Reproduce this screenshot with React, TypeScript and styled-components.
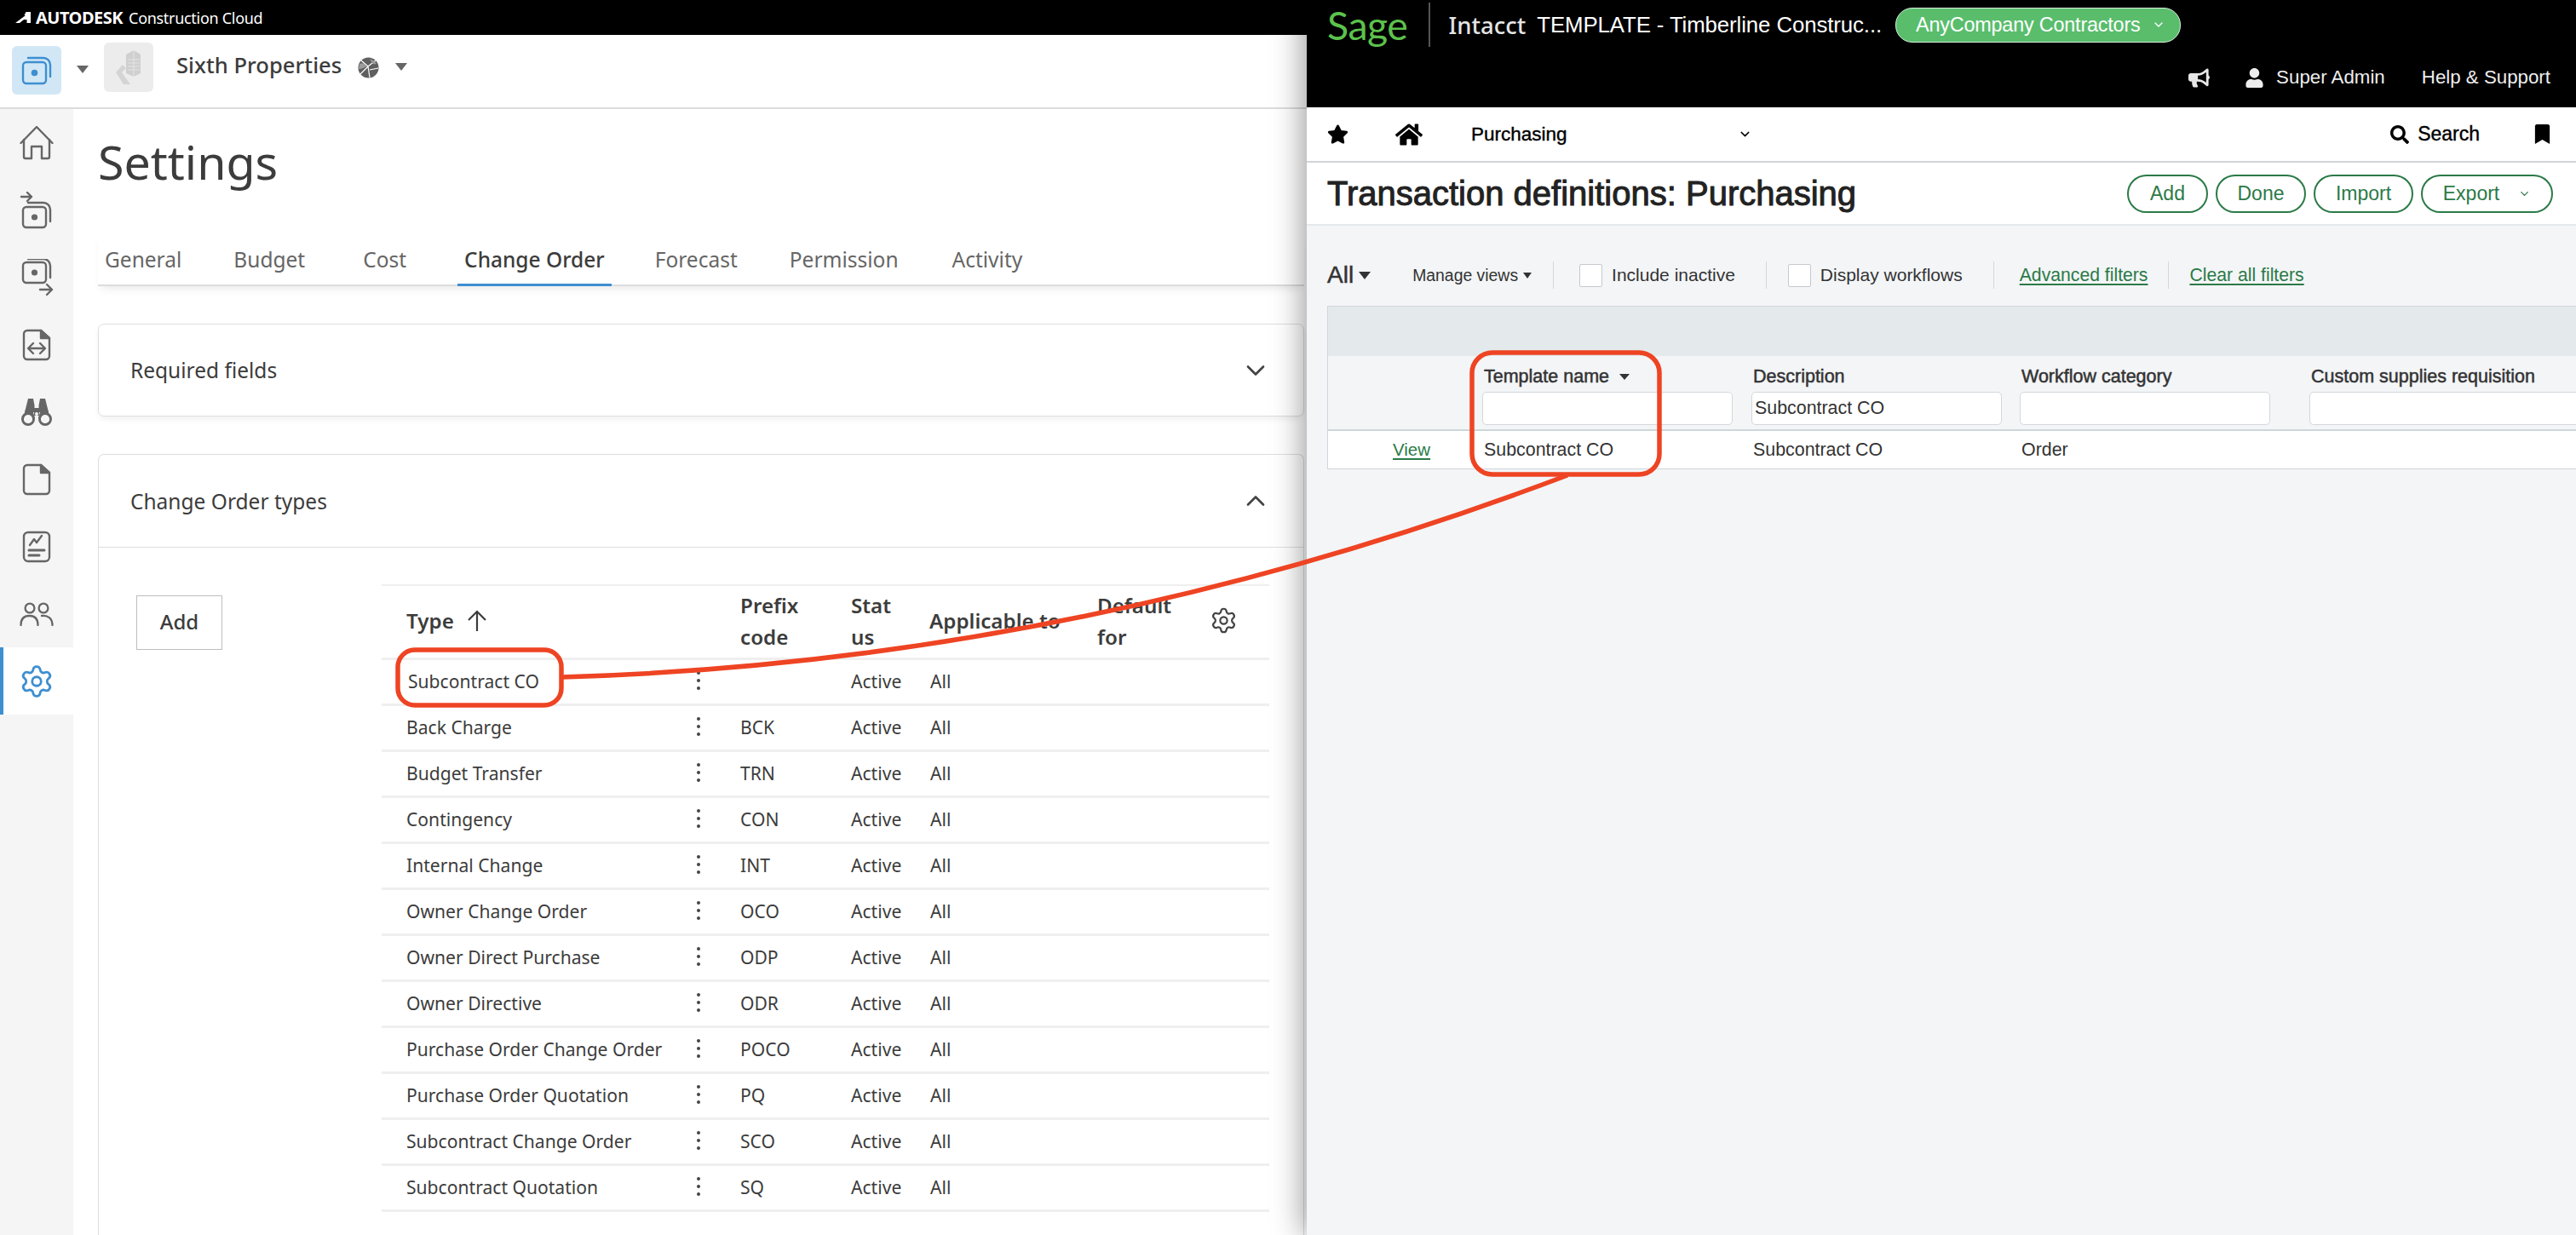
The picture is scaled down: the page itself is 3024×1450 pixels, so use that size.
import React from "react";
import styled, { createGlobalStyle } from "styled-components";
import { ChevronDown, ChevronUp, Settings as Gear } from "lucide-react";
import { FaStar, FaHome, FaSearch, FaBookmark, FaBullhorn, FaUser } from "react-icons/fa";

const Global = createGlobalStyle`
  html, body { margin: 0; padding: 0; background: #fff; }
  * { box-sizing: border-box; }
`;

const ADSK = `"Noto Sans", "Open Sans", sans-serif`;
const SAGE = `"Liberation Sans", Arial, sans-serif`;
const GREEN = "#2b7a47";

const Page = styled.div`
  position: relative;
  display: flex;
  width: 3024px;
  height: 1450px;
  overflow: hidden;
`;

/* ---------- left: Autodesk ---------- */
const LeftPanel = styled.div`
  width: 1534px;
  flex: none;
  display: flex;
  flex-direction: column;
  font-family: ${ADSK};
  color: #3c3c3c;
  overflow: hidden;
`;
const BlackBar = styled.div`
  height: 41px;
  flex: none;
  background: #000;
  color: #fff;
  display: flex;
  align-items: center;
  padding-left: 18px;
`;
const AdskBrand = styled.b`
  font-weight: 700;
  margin: 0 7px 0 6px;
  font-size: 20px;
  letter-spacing: -0.5px;
`;
const AdskSub = styled.span`
  font-weight: 400;
  font-size: 18px;
  letter-spacing: -0.3px;
`;
const ProjectBar = styled.div`
  height: 87px;
  flex: none;
  border-bottom: 2px solid #dcdcdc;
  display: flex;
  align-items: flex-start;
  padding-left: 14px;
`;
const AppTile = styled.div`
  width: 58px;
  height: 57px;
  margin-top: 13px;
  border-radius: 6px;
  background: #d2e7f5;
  display: flex;
  align-items: center;
  justify-content: center;
  color: #3d8fd1;
`;
const Caret = styled.span<{ $w?: number; $c?: string }>`
  display: inline-block;
  flex: none;
  width: 0;
  height: 0;
  border-left: ${(p) => (p.$w ?? 14) / 2}px solid transparent;
  border-right: ${(p) => (p.$w ?? 14) / 2}px solid transparent;
  border-top: ${(p) => ((p.$w ?? 14) * 9) / 14}px solid ${(p) => p.$c ?? "#666"};
`;
const AppCaret = styled.div`
  margin: 36px 18px 0 18px;
  height: 12px;
  line-height: 0;
`;
const LogoTile = styled.div`
  width: 58px;
  height: 58px;
  margin-top: 9px;
  border-radius: 6px;
  background: #ececec;
  display: flex;
  align-items: center;
  justify-content: center;
`;
const ProjectName = styled.div`
  margin: 18px 0 0 27px;
  font-size: 25.6px;
  line-height: 36px;
  font-weight: 500;
  color: #3c3c3c;
`;
const GlobeWrap = styled.div`
  margin: 26px 19px 0 19px;
  line-height: 0;
`;
const ProjectCaret = styled.div`
  margin-top: 33px;
  line-height: 0;
`;
const Body = styled.div`
  flex: 1;
  display: flex;
  min-height: 0;
`;
const Sidebar = styled.nav`
  width: 86px;
  flex: none;
  background: #f5f5f5;
  display: flex;
  flex-direction: column;
`;
const SideItem = styled.div<{ $active?: boolean }>`
  height: 79px;
  display: flex;
  align-items: center;
  justify-content: center;
  color: ${(p) => (p.$active ? "#3d8fd1" : "#666")};
  background: ${(p) => (p.$active ? "#fff" : "transparent")};
  border-left: ${(p) => (p.$active ? "4px solid #3d8fd1" : "none")};
  padding-right: ${(p) => (p.$active ? "4px" : "0")};
`;
const Main = styled.main`
  flex: 1;
  min-width: 0;
  padding: 0 3px 0 29px;
  display: flex;
  flex-direction: column;
`;
const Title = styled.h1`
  margin: 25px 0 48px 0;
  font-size: 55.5px;
  line-height: 74px;
  font-weight: 400;
  color: #3c3c3c;
`;
const Tabs = styled.div`
  flex: none;
  display: flex;
  height: 61px;
  border-bottom: 2px solid #dcdcdc;
  box-shadow: 0 6px 10px -4px rgba(0, 0, 0, 0.1);
`;
const Tab = styled.div<{ $active?: boolean; $gap?: number }>`
  margin-left: ${(p) => p.$gap ?? 0}px;
  padding: 0 8px;
  height: 61px;
  line-height: 60px;
  font-size: 24.5px;
  font-weight: ${(p) => (p.$active ? 500 : 400)};
  color: ${(p) => (p.$active ? "#3c3c3c" : "#666")};
  border-bottom: ${(p) => (p.$active ? "3px solid #3d8fd1" : "none")};
  white-space: nowrap;
`;
const Card = styled.section<{ $open?: boolean }>`
  flex: ${(p) => (p.$open ? "1" : "none")};
  margin-top: 44px;
  border: 1.5px solid #dedede;
  border-radius: 7px 7px ${(p) => (p.$open ? "0 0" : "7px 7px")};
  box-shadow: ${(p) => (p.$open ? "none" : "0 4px 8px -2px rgba(0,0,0,.08)")};
  ${(p) => (p.$open ? "border-bottom: none;" : "")}
`;
const CardHead = styled.div<{ $open?: boolean }>`
  height: ${(p) => (p.$open ? "109px" : "107px")};
  display: flex;
  align-items: center;
  justify-content: space-between;
  padding: 0 38px 0 37px;
  font-size: 24.5px;
  color: #3c3c3c;
  border-bottom: ${(p) => (p.$open ? "1.5px solid #dedede" : "none")};
`;
const CardBody = styled.div`
  display: flex;
  align-items: flex-start;
  padding: 43px 0 0 44px;
`;
const AddButton = styled.button`
  width: 101px;
  height: 64px;
  margin-top: 13px;
  padding: 0 0 3px;
  flex: none;
  background: #fff;
  border: 1.5px solid #bdbdbd;
  font-family: ${ADSK};
  font-size: 24px;
  font-weight: 500;
  color: #3c3c3c;
`;
const TypeTable = styled.div`
  width: 1042px;
  margin-left: 187px;
  flex: none;
  border-top: 2px solid #efefef;
`;
const TypeGrid = `
  display: grid;
  grid-template-columns: 361px 60px 130px 92px 197px 120px 1fr;
`;
const TypeHead = styled.div`
  ${TypeGrid}
  height: 87px;
  padding-bottom: 3px;
  border-bottom: 3px solid #efefef;
  align-items: center;
  font-size: 24.2px;
  line-height: 37px;
  font-weight: 600;
  color: #3c3c3c;
`;
const TypeRow = styled.div`
  ${TypeGrid}
  height: 54px;
  padding-bottom: 3px;
  border-bottom: 3px solid #efefef;
  align-items: center;
  font-size: 21.1px;
  color: #3c3c3c;
`;
const TypeHeadCell = styled.div<{ $pad?: number }>`
  padding-left: ${(p) => p.$pad ?? 0}px;
  display: flex;
  align-items: center;
  gap: 15px;
`;
const TypeCell = styled.div<{ $pad?: number }>`
  padding-left: ${(p) => p.$pad ?? 0}px;
  white-space: nowrap;
`;
const NameCell = styled(TypeCell)`
  grid-column: 1;
  grid-row: 1;
`;
const HeadGear = styled(Gear)`
  margin-left: 12px;
`;
const Kebab = styled.span`
  display: block;
  width: 4px;
  height: 4px;
  margin-left: 370px;
  border-radius: 50%;
  background: #444;
  box-shadow: 0 -9px 0 #444, 0 9px 0 #444;
`;
const KebabCell = styled.div`
  width: 0;
  overflow: visible;
  grid-column: 1;
  grid-row: 1;
`;

/* ---------- right: Sage ---------- */
const RightPanel = styled.div`
  flex: 1;
  min-width: 0;
  position: relative;
  z-index: 2;
  display: flex;
  flex-direction: column;
  font-family: ${SAGE};
  color: #333;
  background: #f3f5f7;
  box-shadow: -4px 0 34px rgba(0, 0, 0, 0.4);
`;
const SageHeader = styled.header`
  height: 126px;
  flex: none;
  background: #000;
  color: #fff;
  display: flex;
  flex-direction: column;
`;
const SageTop = styled.div`
  height: 58px;
  display: flex;
  align-items: center;
  padding-left: 24px;
`;
const SageLogo = styled.span`
  width: 93px;
  flex: none;
  font-family: "Lato", sans-serif;
  font-size: 46.5px;
  line-height: 56px;
  color: #5cc24c;
  white-space: nowrap;
  letter-spacing: -0.5px;
`;
const HeadDivider = styled.span`
  width: 1.5px;
  height: 52px;
  background: #555;
  margin: 0 22px 0 26px;
`;
const Intacct = styled.span`
  font-family: ${ADSK};
  font-size: 27.5px;
  font-weight: 500;
  color: #e4e4e4;
  margin-right: 13px;
`;
const Company = styled.span`
  font-size: 25.8px;
  white-space: nowrap;
  letter-spacing: -0.1px;
`;
const Pill = styled.div`
  margin-left: 16px;
  width: 335px;
  height: 41px;
  flex: none;
  border-radius: 20px;
  background: #59bd6c;
  border: 1.5px solid #d9f0dd;
  display: flex;
  align-items: center;
  padding-left: 23px;
  font-size: 23.4px;
  white-space: nowrap;
  letter-spacing: -0.2px;
  gap: 14px;
`;
const SageUser = styled.div`
  flex: 1;
  display: flex;
  align-items: center;
  justify-content: flex-end;
  padding: 0 30px 2px 0;
  font-size: 22.3px;
  color: #eee;
  white-space: nowrap;
`;
const UserName = styled.span`
  margin: 0 43px 0 14px;
`;
const Megaphone = styled(FaBullhorn)`
  margin-right: 41px;
  color: #e6e6e6;
`;
const SageNav = styled.div`
  height: 65px;
  flex: none;
  background: #fff;
  border-bottom: 2px solid #cfd6db;
  display: flex;
  align-items: center;
  padding: 0 28px 0 24px;
  color: #000;
  font-size: 22.5px;
  font-weight: 500;
`;
const NavHome = styled(FaHome)`
  margin-left: 55px;
`;
const NavLabel = styled.span`
  margin-left: 57px;
  width: 313px;
  -webkit-text-stroke: 0.4px #000;
`;
const NavSpacer = styled.span`
  flex: 1;
`;
const NavSearch = styled.span`
  font-size: 23px;
  -webkit-text-stroke: 0.4px #000;
  margin: 0 62px 0 10px;
`;
const TitleBar = styled.div`
  height: 74px;
  flex: none;
  background: #fff;
  border-bottom: 2px solid #e6e9eb;
  display: flex;
  align-items: center;
  justify-content: space-between;
  padding: 0 27px 0 24px;
`;
const SageTitle = styled.h2`
  margin: 0;
  font-size: 40px;
  font-weight: 400;
  color: #222;
  -webkit-text-stroke: 1px #222;
  white-space: nowrap;
`;
const Buttons = styled.div`
  display: flex;
  gap: 9px;
`;
const PillButton = styled.button<{ $w: number }>`
  width: ${(p) => p.$w}px;
  height: 45px;
  border-radius: 23px;
  border: 2.5px solid ${GREEN};
  background: #fff;
  color: ${GREEN};
  font-family: ${SAGE};
  font-size: 23px;
  display: flex;
  align-items: center;
  justify-content: center;
  gap: 22px;
  padding: 0;
`;
const Filters = styled.div`
  height: 94px;
  flex: none;
  display: flex;
  align-items: center;
  padding: 22px 0 0 24px;
  white-space: nowrap;
`;
const AllLabel = styled.span`
  font-size: 28px;
  color: #333;
  -webkit-text-stroke: 0.5px #333;
  margin-right: 6px;
`;
const ManageViews = styled.span`
  font-size: 19.4px;
  color: #333;
  margin: 0 6px 0 49px;
`;
const VDivider = styled.span<{ $l: number; $r: number }>`
  width: 1px;
  height: 32px;
  background: #d3d8dc;
  margin: 0 ${(p) => p.$r}px 0 ${(p) => p.$l}px;
`;
const CheckBox = styled.span`
  width: 27px;
  height: 27px;
  background: #fff;
  border: 1.5px solid #c6c9cc;
  border-radius: 2px;
  margin-right: 11px;
`;
const FilterText = styled.span`
  font-size: 21px;
  color: #333;
`;
const GreenLink = styled.span<{ $size?: number }>`
  font-size: ${(p) => p.$size ?? 21.2}px;
  color: ${GREEN};
  text-decoration: underline;
  text-underline-offset: 3px;
  text-decoration-thickness: 2px;
`;
const DataTable = styled.div`
  margin-left: 24px;
  border: 1.5px solid #cfd6db;
  border-right: none;
  flex: none;
`;
const Band = styled.div`
  height: 58px;
  background: #e4eaec;
`;
const DataGrid = `
  display: grid;
  grid-template-columns: 181px 316px 315px 340px 1fr;
`;
const ColHead = styled.div`
  ${DataGrid}
  height: 88px;
  padding-top: 12px;
  border-bottom: 2px solid #cfd6db;
`;
const HeadCell = styled.div`
  display: flex;
  flex-direction: column;
  gap: 5px;
`;
const HeadLabel = styled.div`
  font-size: 21.5px;
  line-height: 25px;
  padding-left: 2px;
  color: #333;
  -webkit-text-stroke: 0.5px #333;
  white-space: nowrap;
  display: flex;
  align-items: center;
  gap: 12px;
`;
const FilterInput = styled.input<{ $w?: number }>`
  width: ${(p) => p.$w ?? 294}px;
  height: 39px;
  border: 1.5px solid #d4d8db;
  border-radius: 5px;
  background: #fff;
  padding: 0 3px;
  font-family: ${SAGE};
  font-size: 21.4px;
  color: #333;
  outline: none;
`;
const DataRow = styled.div`
  ${DataGrid}
  height: 44px;
  background: #fff;
  align-items: center;
  font-size: 21.4px;
  color: #333;
`;
const DataCell = styled.div<{ $center?: boolean }>`
  padding-left: ${(p) => (p.$center ? "76px" : "2px")};
  white-space: nowrap;
`;

/* ---------- annotation ---------- */
const Annotation = styled.svg`
  position: absolute;
  left: 0;
  top: 0;
  z-index: 5;
  pointer-events: none;
`;

/* ---------- drawings ---------- */
const StackIcon = ({ arrow }: { arrow?: "in" | "out" }) => (
  <svg width="40" height="44" viewBox="0 0 40 44" fill="none" stroke="currentColor" strokeWidth="2.4" strokeLinecap="round" strokeLinejoin="round">
    {arrow === "out" ? (
      <g transform="translate(0,-6)">
        <rect x="4" y="10" width="27" height="24" rx="4" />
        <circle cx="17.5" cy="22" r="3.6" fill="currentColor" stroke="none" />
        <path d="M10 6h18a8 8 0 0 1 8 8v14" />
        <path d="M24 42h14M32 36l6 6-6 6" />
      </g>
    ) : arrow === "in" ? (
      <g>
        <path d="M2 6h12M9 1l5 5-5 5" />
        <rect x="4" y="18" width="27" height="24" rx="4" />
        <circle cx="17.5" cy="30" r="3.6" fill="currentColor" stroke="none" />
        <path d="M10 13h18a8 8 0 0 1 8 8v14" />
      </g>
    ) : (
      <g>
        <rect x="4" y="12" width="27" height="25" rx="4" />
        <circle cx="17.5" cy="24.5" r="3.8" fill="currentColor" stroke="none" />
        <path d="M10 7h18a8 8 0 0 1 8 8v14" />
      </g>
    )}
  </svg>
);
const HomeIcon = () => (
  <svg width="40" height="40" viewBox="0 0 40 40" fill="none" stroke="currentColor" strokeWidth="2.4" strokeLinejoin="round" strokeLinecap="round">
    <path d="M1.5 20 20 1l18.5 19" />
    <path d="M5 16v20a2 2 0 0 0 2 2h7V24h12v14h7a2 2 0 0 0 2-2V16" />
  </svg>
);
const DocArrowIcon = () => (
  <svg width="34" height="38" viewBox="0 0 34 38" fill="none" stroke="currentColor" strokeWidth="2.4" strokeLinejoin="round" strokeLinecap="round">
    <path d="M22 2H6a4 4 0 0 0-4 4v26a4 4 0 0 0 4 4h22a4 4 0 0 0 4-4V11z" />
    <path d="M22 2l10 9h-10z" fill="currentColor" />
    <path d="M8 23h18M13 17l-6 6 6 6M21 17l6 6-6 6" />
  </svg>
);
const BinocularIcon = () => (
  <svg width="36" height="34" viewBox="0 0 36 34" fill="currentColor" stroke="none">
    <path d="M8 1h6l1.5 8v8H4.5L4 17z" />
    <path d="M22 1h6l4 16H20.5V9z" />
    <rect x="15" y="12" width="6" height="9" />
    <circle cx="8" cy="25" r="6.5" fill="none" stroke="currentColor" strokeWidth="3" />
    <circle cx="28" cy="25" r="6.5" fill="none" stroke="currentColor" strokeWidth="3" />
    <path d="M2 24 5 14h8l3 10zM20 24l3-10h8l3 10z" />
    <circle cx="8" cy="25" r="5" fill="#f5f5f5" />
    <circle cx="28" cy="25" r="5" fill="#f5f5f5" />
    <circle cx="18" cy="19" r="2" fill="#f5f5f5" />
  </svg>
);
const FileIcon = () => (
  <svg width="34" height="38" viewBox="0 0 34 38" fill="none" stroke="currentColor" strokeWidth="2.4" strokeLinejoin="round">
    <path d="M22 2H6a4 4 0 0 0-4 4v26a4 4 0 0 0 4 4h22a4 4 0 0 0 4-4V11z" />
    <path d="M22 2l10 9h-10z" fill="currentColor" />
  </svg>
);
const ReportIcon = () => (
  <svg width="34" height="38" viewBox="0 0 34 38" fill="none" stroke="currentColor" strokeWidth="2.4" strokeLinejoin="round" strokeLinecap="round">
    <rect x="2" y="2" width="30" height="34" rx="5" />
    <path d="M9 17l5-7 3 4 6-8" />
    <path d="M8 23h18M8 29h12" strokeWidth="3" />
  </svg>
);
const PeopleIcon = () => (
  <svg width="40" height="28" viewBox="0 0 40 28" fill="none" stroke="currentColor" strokeWidth="2.3" strokeLinecap="round">
    <circle cx="12" cy="7" r="5.4" />
    <circle cx="28" cy="7" r="5.4" />
    <path d="M1.5 27c0-8 4-11 10-11s10 3 10 11" />
    <path d="M26 16c7-1 12.5 3 12.5 11" />
  </svg>
);
const GlobeIcon = () => (
  <svg width="25" height="25" viewBox="0 0 25 25">
    <circle cx="12.5" cy="12.5" r="12" fill="#5f5f5f" />
    <path d="M4 4l8 7 9-7M12 11l-9 9M12 11l2 13M14 15l10-2" stroke="#fff" strokeWidth="1.2" fill="none" />
    <path d="M2 8c4-2 6 0 8 3-3 2-6 3-9 3zM14 2c3 1 6 3 8 6-3 1-5 0-8-6z" fill="#9c9c9c" />
  </svg>
);
const BuildingIcon = () => (
  <svg width="34" height="42" viewBox="0 0 34 42">
    <path d="M14 6l9-5 8 5v22l-8 4-9-4z" fill="#cfcfcf" />
    <path d="M23 1v31" stroke="#e6e6e6" strokeWidth="1" />
    <path d="M16 12h14M16 16h14M16 20h14M16 24h14" stroke="#e4e4e4" strokeWidth="1" />
    <path d="M10 18 2 27l9 14h8l-10-14 5-5z" fill="#d4d4d4" />
  </svg>
);
const AdskMark = () => (
  <svg width="18" height="13" viewBox="0 0 18 13" fill="#fff">
    <path d="M0 13 12 4h-1.5l2-4H18v13h-4.5V9H10l-5 4z" />
  </svg>
);

const rows: [string, string][] = [
  ["Subcontract CO", ""],
  ["Back Charge", "BCK"],
  ["Budget Transfer", "TRN"],
  ["Contingency", "CON"],
  ["Internal Change", "INT"],
  ["Owner Change Order", "OCO"],
  ["Owner Direct Purchase", "ODP"],
  ["Owner Directive", "ODR"],
  ["Purchase Order Change Order", "POCO"],
  ["Purchase Order Quotation", "PQ"],
  ["Subcontract Change Order", "SCO"],
  ["Subcontract Quotation", "SQ"],
];

export default function App() {
  return (
    <Page>
      <Global />
      <LeftPanel>
        <BlackBar>
          <AdskMark />
          <AdskBrand>AUTODESK</AdskBrand>
          <AdskSub>Construction Cloud</AdskSub>
        </BlackBar>
        <ProjectBar>
          <AppTile>
            <StackIcon />
          </AppTile>
          <AppCaret>
            <Caret />
          </AppCaret>
          <LogoTile>
            <BuildingIcon />
          </LogoTile>
          <ProjectName>Sixth Properties</ProjectName>
          <GlobeWrap>
            <GlobeIcon />
          </GlobeWrap>
          <ProjectCaret>
            <Caret />
          </ProjectCaret>
        </ProjectBar>
        <Body>
          <Sidebar>
            <SideItem><HomeIcon /></SideItem>
            <SideItem><StackIcon arrow="in" /></SideItem>
            <SideItem><StackIcon arrow="out" /></SideItem>
            <SideItem><DocArrowIcon /></SideItem>
            <SideItem><BinocularIcon /></SideItem>
            <SideItem><FileIcon /></SideItem>
            <SideItem><ReportIcon /></SideItem>
            <SideItem><PeopleIcon /></SideItem>
            <SideItem $active><Gear size={42} strokeWidth={1.6} /></SideItem>
          </Sidebar>
          <Main>
            <Title>Settings</Title>
            <Tabs>
              <Tab>General</Tab>
              <Tab $gap={45}>Budget</Tab>
              <Tab $gap={52}>Cost</Tab>
              <Tab $gap={52} $active>Change Order</Tab>
              <Tab $gap={43}>Forecast</Tab>
              <Tab $gap={45}>Permission</Tab>
              <Tab $gap={47}>Activity</Tab>
            </Tabs>
            <Card>
              <CardHead>
                Required fields
                <ChevronDown size={36} strokeWidth={1.8} color="#444" />
              </CardHead>
            </Card>
            <Card $open>
              <CardHead $open>
                Change Order types
                <ChevronUp size={36} strokeWidth={1.8} color="#444" />
              </CardHead>
              <CardBody>
                <AddButton>Add</AddButton>
                <TypeTable>
                  <TypeHead>
                    <TypeHeadCell $pad={29}>
                      Type
                      <svg width="24" height="26" viewBox="0 0 24 26" fill="none" stroke="#3c3c3c" strokeWidth="2.2">
                        <path d="M12 25V2M2 12 12 2l10 10" />
                      </svg>
                    </TypeHeadCell>
                    <div />
                    <div>Prefix<br />code</div>
                    <div>Stat<br />us</div>
                    <div>Applicable to</div>
                    <div>Default<br />for</div>
                    <HeadGear size={33} strokeWidth={1.6} color="#444" />
                  </TypeHead>
                  {rows.map(([name, prefix], i) => (
                    <TypeRow key={name}>
                      <KebabCell><Kebab /></KebabCell>
                      <NameCell $pad={i === 0 ? 31 : 29}>{name}</NameCell>
                      <div />
                      <TypeCell>{prefix}</TypeCell>
                      <TypeCell>Active</TypeCell>
                      <TypeCell $pad={1}>All</TypeCell>
                    </TypeRow>
                  ))}
                </TypeTable>
              </CardBody>
            </Card>
          </Main>
        </Body>
      </LeftPanel>

      <RightPanel>
        <SageHeader>
          <SageTop>
            <SageLogo>Sage</SageLogo>
            <HeadDivider />
            <Intacct>Intacct</Intacct>
            <Company>TEMPLATE - Timberline Construc...</Company>
            <Pill>
              AnyCompany Contractors
              <ChevronDown size={16} strokeWidth={2} />
            </Pill>
          </SageTop>
          <SageUser>
            <Megaphone size={25} />
            <FaUser size={23} />
            <UserName>Super Admin</UserName>
            Help &amp; Support
          </SageUser>
        </SageHeader>
        <SageNav>
          <FaStar size={25} />
          <NavHome size={32} />
          <NavLabel>Purchasing</NavLabel>
          <ChevronDown size={17} strokeWidth={2} />
          <NavSpacer />
          <FaSearch size={22} />
          <NavSearch>Search</NavSearch>
          <FaBookmark size={23} />
        </SageNav>
        <TitleBar>
          <SageTitle>Transaction definitions: Purchasing</SageTitle>
          <Buttons>
            <PillButton $w={95}>Add</PillButton>
            <PillButton $w={106}>Done</PillButton>
            <PillButton $w={117}>Import</PillButton>
            <PillButton $w={155}>
              Export
              <ChevronDown size={15} strokeWidth={2} />
            </PillButton>
          </Buttons>
        </TitleBar>
        <Filters>
          <AllLabel>All</AllLabel>
          <Caret $w={15} $c="#333" />
          <ManageViews>Manage views</ManageViews>
          <Caret $w={11} $c="#333" />
          <VDivider $l={25} $r={30} />
          <CheckBox />
          <FilterText>Include inactive</FilterText>
          <VDivider $l={36} $r={25} />
          <CheckBox />
          <FilterText>Display workflows</FilterText>
          <VDivider $l={36} $r={30} />
          <GreenLink>Advanced filters</GreenLink>
          <VDivider $l={24} $r={24} />
          <GreenLink>Clear all filters</GreenLink>
        </Filters>
        <DataTable>
          <Band />
          <ColHead>
            <div />
            <HeadCell>
              <HeadLabel>Template name <Caret $w={12} $c="#333" /></HeadLabel>
              <FilterInput defaultValue="" />
            </HeadCell>
            <HeadCell>
              <HeadLabel>Description</HeadLabel>
              <FilterInput defaultValue="Subcontract CO" />
            </HeadCell>
            <HeadCell>
              <HeadLabel>Workflow category</HeadLabel>
              <FilterInput defaultValue="" />
            </HeadCell>
            <HeadCell>
              <HeadLabel>Custom supplies requisition</HeadLabel>
              <FilterInput $w={360} defaultValue="" />
            </HeadCell>
          </ColHead>
          <DataRow>
            <DataCell $center><GreenLink $size={20.5}>View</GreenLink></DataCell>
            <DataCell>Subcontract CO</DataCell>
            <DataCell>Subcontract CO</DataCell>
            <DataCell>Order</DataCell>
          </DataRow>
        </DataTable>
      </RightPanel>

      <Annotation width="3024" height="1450" viewBox="0 0 3024 1450" fill="none" stroke="#ee4423" strokeWidth="5.5">
        <rect x="467" y="763" width="192" height="65" rx="20" />
        <rect x="1728" y="414" width="220" height="143" rx="24" />
        <path d="M660 795 C 1000 785, 1400 725, 1840 558" />
      </Annotation>
    </Page>
  );
}
